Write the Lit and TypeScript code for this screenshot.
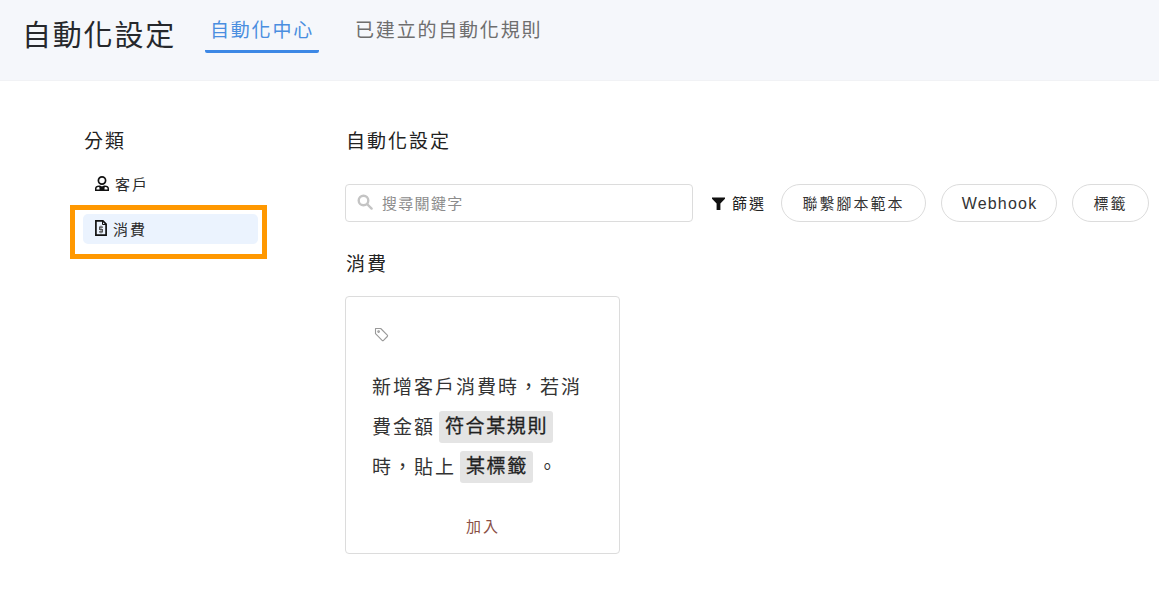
import { LitElement, html, css } from "lit";
import { customElement } from "lit/decorators.js";

@customElement("app-root")
export class AppRoot extends LitElement {
  static styles = css`
    :host {
      display: block;
      width: 1159px;
      height: 609px;
      overflow: hidden;
      background: #fff;
      color: #222;
      font-family: "Liberation Sans", "Noto Sans CJK TC", sans-serif;
      letter-spacing: 2px;
    }
    svg { display: block; flex: none; }
    .header {
      height: 81px;
      box-sizing: border-box;
      background: #f5f7fb;
      border-bottom: 1px solid #f1f2f5;
      display: flex;
      align-items: flex-start;
      padding-left: 22px;
    }
    .title { font-size: 29px; line-height: 40px; margin-top: 16px; color: #26282c; letter-spacing: 1.8px; }
    .tabs { display: flex; margin-left: 29px; gap: 31px; }
    .tab {
      font-size: 19px;
      line-height: 26px;
      padding: 18px 5px 6px 5px;
      color: #6e6e6e;
      letter-spacing: 1.8px;
      border-bottom: 3px solid transparent;
    }
    .tab.active { color: #4a8ee0; border-bottom-color: #3d88e5; border-radius: 0 0 2px 2px; }
    .body { display: flex; }
    .side { width: 345px; box-sizing: border-box; padding: 48px 0 0 83px; flex: none; }
    h2 { font-size: 19px; font-weight: 400; line-height: 26px; margin: 0; color: #222; letter-spacing: 2px; }
    .side h2 { padding-left: 1px; }
    .cats { margin-top: 14px; display: flex; flex-direction: column; gap: 15px; width: 175px; position: relative; }
    .cat {
      height: 30px;
      display: flex;
      align-items: center;
      gap: 7px;
      padding: 0 0 2px 12px;
      box-sizing: border-box;
      font-size: 15px;
      border-radius: 5px;
      color: #2a2a2a;
    }
    .cat span { margin-left: -1px; }
    .cat.on { background: #ebf3fe; }
    .mark {
      position: absolute;
      left: -13px;
      top: 36px;
      width: 197px;
      height: 54px;
      box-sizing: border-box;
      border: 5px solid #ff9800;
      pointer-events: none;
    }
    .main { padding: 48px 0 0 0; flex: 1; min-width: 0; }
    .main h2 { padding-left: 1px; }
    .tools { display: flex; align-items: center; margin-top: 29px; }
    .search {
      width: 348px;
      height: 38px;
      box-sizing: border-box;
      border: 1px solid #dcdcdc;
      border-radius: 4px;
      display: flex;
      align-items: center;
      gap: 9px;
      padding: 0 0 2px 11px;
      font-size: 15px;
      letter-spacing: 1.3px;
      color: #8c8c8c;
    }
    .filter { display: flex; align-items: center; gap: 7px; font-size: 15px; margin-left: 19px; width: 69px; height: 38px; padding-bottom: 2px; box-sizing: border-box; }
    .filter svg { margin-top: 2px; }
    .pills { display: flex; gap: 15px; }
    .pill {
      height: 38px;
      box-sizing: border-box;
      border: 1px solid #dcdcdc;
      border-radius: 19px;
      display: flex;
      align-items: center;
      justify-content: center;
      padding-bottom: 2px;
      font-size: 15px;
      color: #333;
    }
    .p1 { width: 145px; }
    .p2 { width: 116px; font-size: 16px; letter-spacing: 1.2px; padding: 2px 0 0 1px; }
    .p3 { width: 77px; }
    .main h2.section { margin-top: 30px; }
    .card {
      margin-top: 18px;
      width: 275px;
      height: 258px;
      box-sizing: border-box;
      border: 1px solid #dcdcdc;
      border-radius: 4px;
      padding: 30px 26px 0;
      display: flex;
      flex-direction: column;
    }
    .card svg { margin-left: 2px; }
    .text { margin-top: 26px; font-size: 19px; line-height: 40px; color: #333; letter-spacing: 2px; }
    .chip {
      display: inline-block;
      background: #e4e4e4;
      border-radius: 3px;
      line-height: 32px;
      padding: 0 5px 0 6px;
      margin: 0 5px 0 4px;
      vertical-align: 1px;
      color: #222;
      -webkit-text-stroke: 0.3px #222;
      letter-spacing: 1.6px;
    }
    .add { margin-top: 29px; padding-left: 1px; text-align: center; font-size: 15px; color: #8a4f45; line-height: 20px; }
  `;

  render() {
    return html`
      <div class="header">
        <div class="title">自動化設定</div>
        <div class="tabs">
          <div class="tab active">自動化中心</div>
          <div class="tab">已建立的自動化規則</div>
        </div>
      </div>
      <div class="body">
        <div class="side">
          <h2>分類</h2>
          <div class="cats">
            <div class="cat">
              <svg width="14" height="15" viewBox="0 0 14 15">
                <circle cx="7" cy="4.5" r="3.6" fill="none" stroke="#111" stroke-width="1.7"/>
                <path d="M0 15v-2.5C0 10.5 1.6 9.4 4.2 9.4c.9 0 1.5.3 2.8 1 1.3-.7 1.9-1 2.8-1 2.6 0 4.2 1.1 4.2 3.1V15zM1.5 13.6h3v-1.7c0-.5-.5-.9-1.2-.9-1.1.1-1.8.7-1.8 1.5zM9.5 13.6h3v-1.1c0-.8-.7-1.4-1.8-1.5-.7 0-1.2.4-1.2.9z" fill="#111" fill-rule="evenodd"/>
              </svg>
              <span>客戶</span>
            </div>
            <div class="cat on">
              <svg width="12" height="16" viewBox="0 0 12 16" fill="none">
                <path d="M.9.9h7l3.2 3.2v11H.9z" stroke="#111" stroke-width="1.7"/>
                <path d="M7.5 1v3.5H11" stroke="#111" stroke-width="1"/>
                <path d="M6 5.5v8" stroke="#777" stroke-width="1"/>
                <path d="M8 7.2H4.6v2.3h2.8v2.3H4" stroke="#555" stroke-width="1.2"/>
              </svg>
              <span>消費</span>
            </div>
            <div class="mark"></div>
          </div>
        </div>
        <div class="main">
          <h2>自動化設定</h2>
          <div class="tools">
            <div class="search">
              <svg width="16" height="16" viewBox="0 0 16 16" fill="none" stroke="#c4c4c4" stroke-width="2.4">
                <circle cx="6.5" cy="6.5" r="4.8"/>
                <path d="M10 10l4.6 4.6" stroke-linecap="round"/>
              </svg>
              <span>搜尋關鍵字</span>
            </div>
            <div class="filter">
              <svg width="13" height="13" viewBox="0 0 13 13" fill="#111"><path d="M0 .5h13v1.2L8.4 6.6V13H4.6V6.6L0 1.7z"/></svg>
              <span>篩選</span>
            </div>
            <div class="pills">
              <div class="pill p1">聯繫腳本範本</div>
              <div class="pill p2">Webhook</div>
              <div class="pill p3">標籤</div>
            </div>
          </div>
          <h2 class="section">消費</h2>
          <div class="card">
            <svg width="15" height="15" viewBox="0 0 15 15" fill="none" stroke="#999" stroke-width="1.1" stroke-linejoin="round">
              <path d="M1.5 1.5h5.2l6.6 6.6a1 1 0 0 1 0 1.4l-3.8 3.8a1 1 0 0 1-1.4 0L1.5 6.7z"/>
              <circle cx="4.6" cy="4.6" r=".8"/>
            </svg>
            <div class="text">新增客戶消費時，若消<br>費金額<span class="chip">符合某規則</span><br>時，貼上<span class="chip">某標籤</span><span>。</span></div>
            <div class="add">加入</div>
          </div>
        </div>
      </div>
    `;
  }
}
